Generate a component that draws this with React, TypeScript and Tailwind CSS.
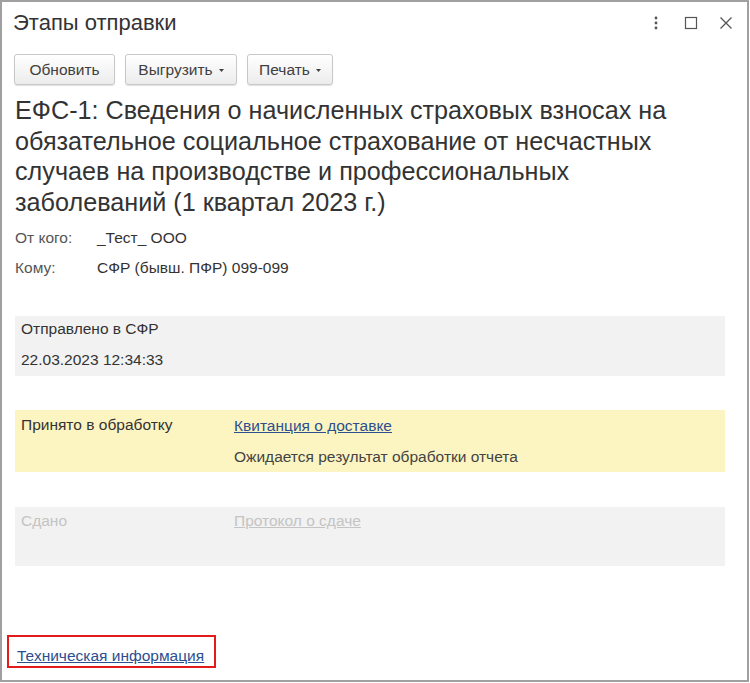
import React from 'react';

const FONT = { fontFamily: '"Liberation Sans", Arial, sans-serif' };

const ToolButton: React.FC<{ label: string; menu?: boolean; className?: string }> = ({ label, menu, className }) => (
  <button
    className={`h-[31px] rounded-[3px] border border-[#c8c8c8] bg-gradient-to-b from-white to-[#ececec] shadow-[0_1px_1px_rgba(0,0,0,0.12)] text-[15.5px] text-[#404040] flex items-center justify-center ${className ?? ''}`}
  >
    {label}
    {menu && (
      <svg width="5" height="3" viewBox="0 0 5 3" className="ml-[6px] mt-[2px]">
        <path d="M0 0 H5 L2.5 3 Z" fill="#404040" />
      </svg>
    )}
  </button>
);

export default function App() {
  return (
    <div style={FONT} className="w-[750px] h-[683px] bg-white">
      <div className="w-[749px] h-[682px] border-2 border-[#a0a0a0] flex flex-col overflow-hidden">
        {/* Title bar */}
        <div className="h-[42px] flex items-center pl-[11px] pr-[14px]">
          <h1 className="text-[22px] leading-none text-[#333] flex-1">Этапы отправки</h1>
          <div className="flex items-center gap-[21px]">
            <svg width="14" height="16" viewBox="0 0 14 16">
              <circle cx="7" cy="3" r="1.4" fill="#555" />
              <circle cx="7" cy="8" r="1.4" fill="#555" />
              <circle cx="7" cy="13" r="1.4" fill="#555" />
            </svg>
            <svg width="14" height="14" viewBox="0 0 14 14">
              <rect x="1.5" y="1.5" width="11" height="11" fill="none" stroke="#555" strokeWidth="1.2" />
            </svg>
            <svg width="14" height="14" viewBox="0 0 14 14">
              <path d="M1.5 1.5 L12.5 12.5 M12.5 1.5 L1.5 12.5" stroke="#555" strokeWidth="1.3" />
            </svg>
          </div>
        </div>

        {/* Toolbar */}
        <div className="flex gap-[10px] pl-[12px] pt-[10px]">
          <ToolButton label="Обновить" className="w-[101px]" />
          <ToolButton label="Выгрузить" menu className="w-[112px]" />
          <ToolButton label="Печать" menu className="w-[86px]" />
        </div>

        {/* Heading */}
        <h2 className="text-[25.2px] leading-[30.5px] text-[#333] pl-[13px] pr-[22px] pt-[10px]">
          ЕФС-1: Сведения о начисленных страховых взносах на обязательное социальное страхование от несчастных случаев на производстве и профессиональных заболеваний (1 квартал 2023 г.)
        </h2>

        {/* From / To */}
        <div className="pl-[13px] pt-[12px] text-[15.5px] leading-[18px] text-[#333] flex flex-col gap-[12px]">
          <div className="flex">
            <span className="w-[82px] text-[#555]">От кого:</span>
            <span>_Тест_ ООО</span>
          </div>
          <div className="flex">
            <span className="w-[82px] text-[#555]">Кому:</span>
            <span>СФР (бывш. ПФР) 099-099</span>
          </div>
        </div>

        {/* Stages */}
        <div className="flex flex-col pl-[13px] pr-[22px] mt-[39px] text-[15.5px] leading-[18px]">
          <div className="h-[60px] bg-[#f2f2f2] px-[6px] pt-[4px] text-[#333] flex flex-col gap-[13px]">
            <div>Отправлено в СФР</div>
            <div>22.03.2023 12:34:33</div>
          </div>

          <div className="h-[62px] mt-[34px] bg-[#fdf5c1] px-[6px] pt-[6px] flex">
            <div className="w-[213px] text-[#333]">Принято в обработку</div>
            <div className="flex flex-col gap-[13px] pt-[1px]">
              <a href="#" className="text-[#2d4f8f] underline">Квитанция о доставке</a>
              <span className="text-[#444]">Ожидается результат обработки отчета</span>
            </div>
          </div>

          <div className="h-[59px] mt-[35px] bg-[#f2f2f2] px-[6px] pt-[5px] flex">
            <div className="w-[213px] text-[#c4c4c4]">Сдано</div>
            <a href="#" className="text-[#c4c4c4] underline">Протокол о сдаче</a>
          </div>
        </div>

        {/* Footer link */}
        <div className="mt-auto pl-[5px] pb-[12px]">
          <div className="border-2 border-[#e41b1b] w-[209px] h-[33px] pl-[8px] pt-[10px] text-[15.5px] leading-[18px]">
            <a href="#" className="text-[#2d4f8f] underline">Техническая информация</a>
          </div>
        </div>
      </div>
    </div>
  );
}
